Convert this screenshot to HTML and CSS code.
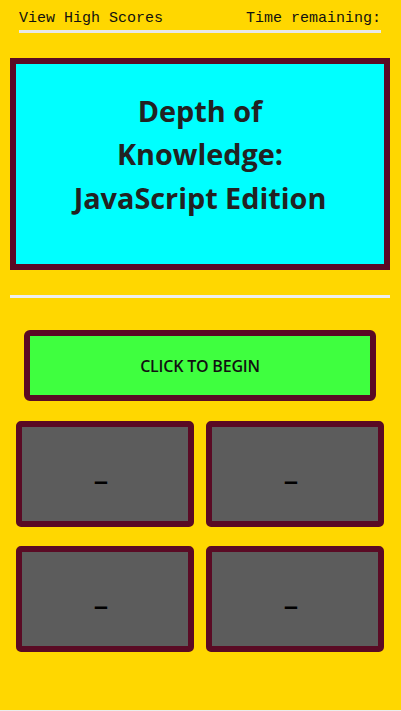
FILE: index.html
```html
<!DOCTYPE html>
<html lang="en">
<head>
<meta charset="utf-8">
<title>Depth of Knowledge</title>
<link rel="stylesheet" href="styles.css">
</head>
<body>
<main class="page">
  <header class="topbar">
    <a class="scores-link">View High Scores</a>
    <span class="timer">Time remaining:</span>
  </header>
  <section class="title-box">
    <h1 class="title">Depth of Knowledge: JavaScript Edition</h1>
  </section>
  <div class="divider"></div>
  <button class="start-btn">CLICK TO BEGIN</button>
  <div class="answers">
    <button class="answer">–</button>
    <button class="answer">–</button>
    <button class="answer">–</button>
    <button class="answer">–</button>
  </div>
</main>
</body>
</html>
```
FILE: styles.css
```css
html {
  background: #ececec;
}
body {
  margin: 0;
  min-height: 710px;
  background: #ffd700;
}
.page {
  padding: 0 11px 0 10px;
}
.topbar {
  margin: 0 9px;
  padding-top: 9px;
  padding-bottom: 1px;
  display: flex;
  justify-content: space-between;
  font-family: "Liberation Mono", monospace;
  font-size: 15px;
  line-height: 20px;
  color: #111;
  border-bottom: 3px solid #e8e8e8;
}
.title-box {
  margin-top: 25px;
  background: #00ffff;
  border: 6px solid #5a0a24;
  box-sizing: border-box;
  height: 212px;
  padding: 25px 30px 0;
}
.title {
  margin: 0;
  text-align: center;
  font-family: "Open Sans", sans-serif;
  font-weight: 700;
  font-size: 28.8px;
  line-height: 43.4px;
  color: #222;
  padding: 0 22px;
}
.divider {
  margin-top: 25px;
  height: 3px;
  background: #eeeeee;
}
.start-btn {
  display: block;
  box-sizing: border-box;
  margin: 32px 14px 0;
  width: calc(100% - 28px);
  height: 71px;
  background: #3fff3f;
  border: 6px solid #5a0a24;
  border-radius: 6px;
  font-family: "Open Sans", sans-serif;
  font-weight: 600;
  font-size: 16px;
  letter-spacing: -0.2px;
  color: #111;
  padding: 0;
}
.answers {
  margin: 20px 6px 0;
  display: grid;
  grid-template-columns: 1fr 1fr;
  column-gap: 12px;
  row-gap: 19px;
}
.answer {
  box-sizing: border-box;
  height: 106px;
  background: #5c5c5c;
  border: 6px solid #5a0a24;
  border-radius: 5px;
  font-family: "Liberation Sans", sans-serif;
  font-weight: 700;
  font-size: 25px;
  color: #000;
  padding: 14px 8px 0 0;
}
```
